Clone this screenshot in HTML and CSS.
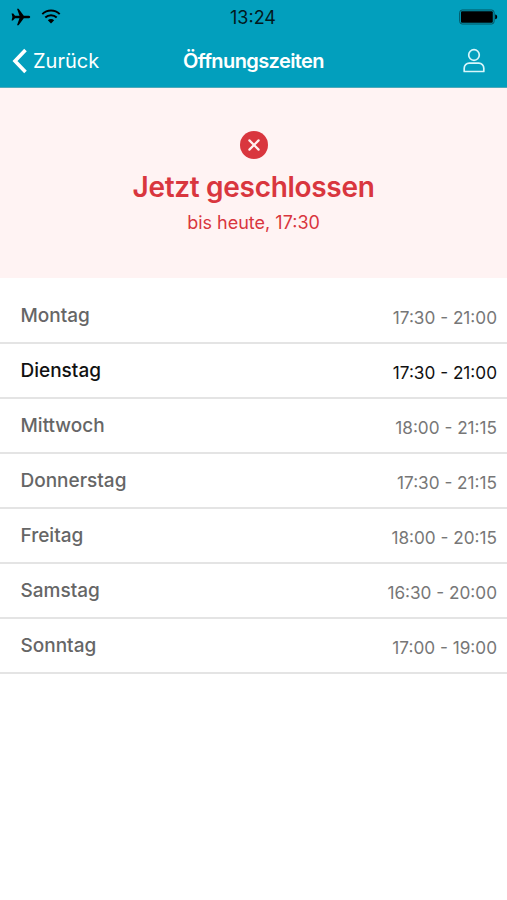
FILE: index.html
```
<!DOCTYPE html>
<html lang="de">
<head>
    <meta charset="UTF-8">
    <meta name="viewport" content="width=device-width, initial-scale=1.0">
    <title>Öffnungszeiten</title>
    <link rel="stylesheet" href="styles.css">
</head>
<body>

    <header class="header">
        <div class="status-bar">
            <div class="status-left">
                <svg width="20" height="18" viewBox="0 0 20 18">
                    <path d="M19.200 9c0-.8-.9-1.300-2-1.300h-4.400L7.600.7H6l2.500 7H4L2.300 5.600H.6L1.400 9l-.8 3.400h1.300L4 10.300h4.500L6 17.300h1.600l5.200-7h4.400c1.100 0 2-.5 2-1.300z"/>
                </svg>
                <svg width="20" height="16" viewBox="0 0 20 16">
                    <path d="M1.300 5.100a12.500 12.500 0 0 1 17.400 0M4.300 8.500a8.200 8.200 0 0 1 11.400 0" fill="none" stroke="#000" stroke-width="2"/>
                    <path d="M10 14.600l-3.200-3.300a4.600 4.600 0 0 1 6.400 0z"/>
                </svg>
            </div>
            <span class="clock">13:24</span>
            <div class="status-right">
                <svg width="40" height="16" viewBox="0 0 40 16">
                    <rect x="1.700" y="1" width="34.400" height="14" rx="2.500" fill="none" stroke="#03525f" stroke-width="1"/>
                    <rect x="3" y="2.200" width="31.800" height="11.600" rx="1"/>
                    <path d="M37.200 5.500c1.300.3 2 1.200 2 2.400s-.7 2.100-2 2.400z"/>
                </svg>
            </div>
        </div>
        <nav class="nav-bar">
            <a class="back" href="#">
                <svg width="16" height="26" viewBox="0 0 16 26">
                    <path d="M14.500 2L4 13l10.500 11" fill="none" stroke="#fff" stroke-width="3.600"/>
                </svg>
                <span>Zurück</span>
            </a>
            <h1 class="title">Öffnungszeiten</h1>
            <a class="profile" href="#" aria-label="Profil">
                <svg width="22" height="26" viewBox="0 0 22 26">
                    <g fill="none" stroke="#d8f6fb" stroke-width="1.700">
                        <circle cx="11" cy="7" r="5.300"/>
                        <path d="M1.200 23.500v-3.300a5 5 0 0 1 5-5h9.600a5 5 0 0 1 5 5v3.300z" stroke-linejoin="round"/>
                    </g>
                </svg>
            </a>
        </nav>
    </header>

    <section class="status">
        <svg width="28" height="28" viewBox="0 0 28 28">
            <circle cx="14" cy="14" r="14" fill="#d9363e"/>
            <path d="M9.400 9.400l9.200 9.200M18.600 9.400l-9.200 9.200" stroke="#fff1f0" stroke-width="2.200" stroke-linecap="round"/>
        </svg>
        <h2 class="status-title">Jetzt geschlossen</h2>
        <p class="status-text">bis heute, 17:30</p>
    </section>

    <ul class="hours">
        <li><span class="day">Montag</span><span class="time">17:30 - 21:00</span></li>
        <li class="today"><span class="day">Dienstag</span><span class="time">17:30 - 21:00</span></li>
        <li><span class="day">Mittwoch</span><span class="time">18:00 - 21:15</span></li>
        <li><span class="day">Donnerstag</span><span class="time">17:30 - 21:15</span></li>
        <li><span class="day">Freitag</span><span class="time">18:00 - 20:15</span></li>
        <li><span class="day">Samstag</span><span class="time">16:30 - 20:00</span></li>
        <li><span class="day">Sonntag</span><span class="time">17:00 - 19:00</span></li>
    </ul>

</body>
</html>
```
FILE: styles.css
```
* {
    box-sizing: border-box;
}
body {
    margin: 0;
    background-color: #fff;
    font-family: Inter, "Liberation Sans", sans-serif;
}
h1, h2, p, ul {
    margin: 0;
    padding: 0;
}
a {
    color: inherit;
    text-decoration: none;
}
svg {
    display: block;
}
.header {
    height: 88px;
    background-color: #029fbd;
    border-bottom: 1px solid #4fa9ba;
}
.status-bar, .nav-bar {
    display: grid;
    grid-template-columns: 1fr auto 1fr;
    align-items: center;
}
.status-bar {
    height: 34px;
    padding: 0 9px 0 11px;
}
.status-left {
    display: flex;
    align-items: center;
    gap: 10px;
}
.status-right {
    justify-self: end;
}
.clock {
    padding: 2px 3px 0 0;
    font-size: 18px;
    line-height: 32px;
    color: #02191e;
}
.nav-bar {
    height: 53px;
    padding: 0 22px 0 11px;
    color: #fff;
}
.back {
    display: flex;
    align-items: center;
    gap: 6px;
    font-size: 20px;
}
.title {
    margin-left: 11px;
    font-size: 20px;
    font-weight: 600;
    letter-spacing: -0.6px;
}
.profile {
    justify-self: end;
}
.status {
    display: flex;
    flex-direction: column;
    align-items: center;
    height: 190px;
    padding-top: 43px;
    background-color: #fff3f3;
    color: #d9363e;
}
.status-title {
    margin-top: 10px;
    font-size: 28px;
    font-weight: 600;
    line-height: 36px;
    letter-spacing: -0.3px;
}
.status-text {
    margin-top: 5px;
    font-size: 18px;
    line-height: 26px;
}
.hours {
    padding-top: 11px;
    list-style: none;
}
.hours li {
    display: flex;
    justify-content: space-between;
    align-items: center;
    height: 55px;
    padding: 0 10px 0 20.5px;
    border-bottom: 2px solid #e4e4e4;
    color: #666;
}
.day {
    font-size: 19px;
    font-weight: 500;
}
.time {
    padding-top: 4px;
    font-size: 17.2px;
    color: #777;
}
.hours .today, .today .time {
    color: #111;
}
```
